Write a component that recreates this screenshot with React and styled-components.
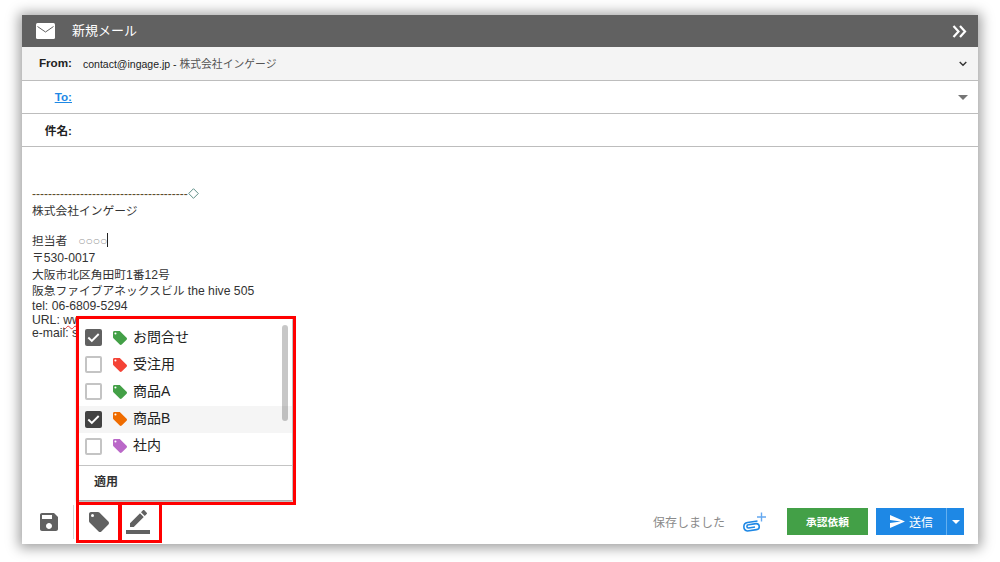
import React from "react";
import styled, { createGlobalStyle } from "styled-components";

const FONT = `"Liberation Sans", "Noto Sans CJK JP", sans-serif`;

const Global = createGlobalStyle`
  html, body { margin: 0; padding: 0; background: #fff; width: 1000px; height: 562px; overflow: hidden; }
  body { font-family: ${FONT}; }
  * { box-sizing: border-box; }
`;

const Page = styled.div`
  width: 1000px;
  height: 562px;
  padding: 15px 22px 18px;
`;

const Panel = styled.div`
  position: relative;
  height: 529px;
  background: #fff;
  display: flex;
  flex-direction: column;
  box-shadow: 0 1px 12px 3px rgba(0, 0, 0, 0.38);
`;

const Header = styled.div`
  height: 32px;
  background: #616161;
  display: flex;
  align-items: center;
  padding: 0 11px 0 14px;
  color: #fff;
  flex: none;
`;

const HeaderTitle = styled.div`
  font-size: 13px;
  line-height: 17px;
  margin: -1px 0 0 17px;
  flex: 1;
`;

const Row = styled.div`
  height: ${(p) => p.$h}px;
  flex: none;
  display: flex;
  align-items: center;
  background: ${(p) => (p.$shaded ? "#f4f4f4" : "#fff")};
  border-bottom: 1px solid #bdbdbd;
  padding-right: ${(p) => p.$pr || 10}px;
`;

const Label = styled.div`
  width: 50px;
  text-align: right;
  font-size: 11.7px;
  font-weight: 700;
  color: #222;
  flex: none;
  margin-top: -2px;
`;

const ToLabel = styled(Label)`
  color: #1e88e5;
  text-decoration: underline;
`;

const FromValue = styled.div`
  margin: -2px 0 0 11px;
  font-size: 10.5px;
  color: #222;
  flex: 1;
`;

const FromName = styled.span`
  font-size: 10.8px;
  color: #555;
`;

const Spacer = styled.div`
  flex: 1;
`;

const Body = styled.div`
  flex: 1;
  padding: 38px 10px 0;
  font-size: 12.2px;
  color: #333;
  min-height: 0;
`;

const Line = styled.div`
  height: ${(p) => p.$h}px;
  line-height: ${(p) => p.$h}px;
  white-space: nowrap;
`;

const Jp = styled.span`
  font-size: 11.75px;
`;

const DashLine = styled.div`
  display: flex;
  align-items: center;
  height: 17px;
  margin-bottom: 1px;
  font-size: 12px;
  color: #5a4a2a;
  white-space: nowrap;
`;

const Circles = styled.span`
  color: #999;
  margin-left: 11px;
  font-size: 12px;
`;

const Caret = styled.span`
  display: inline-block;
  width: 1px;
  height: 14px;
  background: #222;
  vertical-align: -2px;
`;

const Squiggle = styled.span`
  text-decoration: underline wavy #e53935 1px;
`;

const Footer = styled.div`
  height: 46px;
  flex: none;
  display: flex;
  align-items: center;
  padding: 1px 14px 0 18px;
`;

const ToolIcon = styled.div`
  width: ${(p) => p.$w}px;
  margin-left: ${(p) => p.$ml || 0}px;
  display: flex;
  align-items: center;
  justify-content: center;
  flex: none;
`;

const Divider = styled.div`
  width: 1px;
  height: 34px;
  background: #d5d5d5;
  margin: 0 15px;
  flex: none;
`;

const Saved = styled.div`
  font-size: 12px;
  color: #8a8a8a;
  margin-right: 17px;
`;

const ApproveButton = styled.button`
  width: 81px;
  height: 27px;
  margin-left: 19px;
  margin-right: 8px;
  background: #43a047;
  color: #fff;
  border: none;
  padding: 0;
  font: 700 10.7px ${FONT};
`;

const SendGroup = styled.div`
  display: flex;
  height: 27px;
  width: 88px;
  background: #1e88e5;
  color: #fff;
  flex: none;
`;

const SendMain = styled.div`
  flex: 1;
  display: flex;
  align-items: center;
  justify-content: center;
  gap: 4px;
  font-size: 12px;
  border-right: 1px solid #64b0f0;
  padding-left: 1px;
`;

const SendCaret = styled.div`
  width: 17px;
  display: flex;
  align-items: center;
  justify-content: center;
`;

const Triangle = styled.div`
  width: 0;
  height: 0;
  border-left: ${(p) => p.$s}px solid transparent;
  border-right: ${(p) => p.$s}px solid transparent;
  border-top: ${(p) => p.$s}px solid ${(p) => p.$c};
`;

const Popup = styled.div`
  position: absolute;
  left: 56px;
  top: 303px;
  width: 214px;
  height: 182px;
  background: #fff;
  box-shadow: 0 1px 3px 1px rgba(0, 0, 0, 0.4);
  padding-top: 6px;
  display: flex;
  flex-direction: column;
`;

const Item = styled.div`
  height: 27.2px;
  flex: none;
  display: flex;
  align-items: center;
  padding-left: 7px;
  background: ${(p) => (p.$hover ? "#f5f5f5" : "transparent")};
  font-size: 14px;
  color: #222;
`;

const ItemLabel = styled.span`
  margin-top: -4px;
`;

const Check = styled.div`
  width: 17px;
  height: 17px;
  border-radius: 2px;
  display: flex;
  align-items: center;
  justify-content: center;
  background: ${(p) => (p.$on ? p.$c : "#fff")};
  border: ${(p) => (p.$on ? "none" : "2px solid #c4c4c4")};
  flex: none;
`;

const TagWrap = styled.div`
  width: 15px;
  height: 15px;
  margin: 1px 5px 0 11px;
  flex: none;
  display: flex;
`;

const Scrollbar = styled.div`
  position: absolute;
  right: 4px;
  top: 7px;
  width: 6px;
  height: 96px;
  border-radius: 3px;
  background: rgba(0, 0, 0, 0.22);
`;

const PopupRule = styled.div`
  height: 1px;
  background: #c4c4c4;
  margin-top: 5px;
  flex: none;
`;

const Apply = styled.div`
  flex: 1;
  display: flex;
  align-items: center;
  padding: 0 0 5px 16px;
  font-size: 12px;
  font-weight: 700;
  color: #333;
`;

const Highlight = styled.div`
  position: absolute;
  left: ${(p) => p.$l}px;
  top: ${(p) => p.$t}px;
  width: ${(p) => p.$w}px;
  height: ${(p) => p.$h}px;
  border: 3px solid #f00;
  pointer-events: none;
`;

const MailIcon = () => (
  <svg width="19" height="16" viewBox="0 0 19 16">
    <rect x="0" y="0" width="19" height="16" rx="1.5" fill="#fff" />
    <path d="M1.5 3.5 L9.5 9 L17.5 3.5" fill="none" stroke="#616161" strokeWidth="1" />
  </svg>
);

const DoubleChevron = () => (
  <svg width="15" height="13" viewBox="0 0 15 13">
    <path d="M1.5 1 L6.5 6.5 L1.5 12 M8 1 L13 6.5 L8 12" fill="none" stroke="#fff" strokeWidth="2.2" />
  </svg>
);

const SmallChevron = () => (
  <svg width="8" height="6" viewBox="0 0 8 6">
    <path d="M0.7 1 L4 4.3 L7.3 1" fill="none" stroke="#333" strokeWidth="1.4" />
  </svg>
);

const Tick = () => (
  <svg width="13" height="11" viewBox="0 0 13 11">
    <path d="M1.3 5.5 L4.8 9 L11.7 2" fill="none" stroke="#fff" strokeWidth="1.9" />
  </svg>
);

const Tag = ({ color, size = 14 }) => (
  <svg width={size} height={size} viewBox="2 2 20 20">
    <path
      fill={color}
      d="M21.41 11.58l-9-9C12.05 2.22 11.55 2 11 2H4c-1.1 0-2 .9-2 2v7c0 .55.22 1.05.59 1.42l9 9c.36.36.86.58 1.41.58.55 0 1.05-.22 1.41-.59l7-7c.37-.36.59-.86.59-1.41 0-.55-.23-1.06-.59-1.42z"
    />
    <circle cx="5.5" cy="5.5" r="1.5" fill="#fff" />
  </svg>
);

const SaveIcon = () => (
  <svg width="18" height="18" viewBox="3 3 18 18">
    <path
      fill="#616161"
      d="M17 3H5c-1.11 0-2 .9-2 2v14c0 1.1.89 2 2 2h14c1.1 0 2-.9 2-2V7l-4-4zm-5 16c-1.66 0-3-1.34-3-3s1.34-3 3-3 3 1.34 3 3-1.34 3-3 3zm3-10H5V5h10v4z"
    />
  </svg>
);

const PencilIcon = () => (
  <svg width="24" height="24" viewBox="0 0 24 24">
    <path fill="#616161" d="M0 20h24v4H0z" />
    <path fill="#616161" d="M17.75 7L14 3.25l-10 10V17h3.75l10-10zm2.96-2.96c.39-.39.39-1.02 0-1.41L18.37.29c-.39-.39-1.02-.39-1.41 0L15 2.25 18.75 6l1.96-1.96z" />
  </svg>
);

const ClipIcon = () => (
  <svg width="26" height="22" viewBox="0 0 26 22">
    <path
      d="M15.5 10 L5.5 11.5 A4.3 4.3 0 0 0 5.5 20 L14.5 18.6 A3 3 0 0 0 14 12.6 L6.5 13.8 A1.6 1.6 0 0 0 6.5 17 L13 16"
      fill="none"
      stroke="#1e88e5"
      strokeWidth="1.6"
    />
    <path d="M19.5 1.5 V10.5 M15 6 H24" stroke="#64a8f0" strokeWidth="1.4" />
  </svg>
);

const SendIcon = () => (
  <svg width="15" height="13" viewBox="2 3 21 18">
    <path fill="#fff" d="M2.01 21L23 12 2.01 3 2 10l15 2-15 2z" />
  </svg>
);

const DiamondIcon = () => (
  <svg width="11" height="11" viewBox="0 0 11 11">
    <path d="M5.5 0.7 L10.3 5.5 L5.5 10.3 L0.7 5.5 Z" fill="none" stroke="#5f8f88" />
  </svg>
);

const tags = [
  { label: "お問合せ", color: "#43a047", checked: true, box: "#616161" },
  { label: "受注用", color: "#f44336" },
  { label: "商品A", color: "#43a047" },
  { label: "商品B", color: "#ef6c00", checked: true, box: "#424242", hover: true },
  { label: "社内", color: "#ba68c8" },
];

export default function App() {
  return (
    <Page>
      <Global />
      <Panel>
        <Header>
          <MailIcon />
          <HeaderTitle>新規メール</HeaderTitle>
          <DoubleChevron />
        </Header>
        <Row $h={34} $shaded $pr={11}>
          <Label>From:</Label>
          <FromValue>
            contact@ingage.jp - <FromName>株式会社インゲージ</FromName>
          </FromValue>
          <SmallChevron />
        </Row>
        <Row $h={33}>
          <ToLabel>To:</ToLabel>
          <Spacer />
          <Triangle $s={5} $c="#757575" />
        </Row>
        <Row $h={33}>
          <Label>件名:</Label>
        </Row>
        <Body>
          <DashLine>
            {"-".repeat(39)}
            <DiamondIcon />
          </DashLine>
          <Line $h={16}>
            <Jp>株式会社インゲージ</Jp>
          </Line>
          <Line $h={14} />
          <Line $h={16}>
            <Jp>担当者</Jp>
            <Circles>○○○○</Circles>
            <Caret />
          </Line>
          <Line $h={17}>
            <Jp>〒</Jp>530-0017
          </Line>
          <Line $h={17}>
            <Jp>大阪市北区角田町</Jp>1<Jp>番</Jp>12<Jp>号</Jp>
          </Line>
          <Line $h={16}>
            <Jp>阪急ファイブアネックスビル</Jp> the hive 505
          </Line>
          <Line $h={15}>tel: 06-6809-5294</Line>
          <Line $h={13}>
            URL: <Squiggle>www</Squiggle>
          </Line>
          <Line $h={12}>e-mail: s</Line>
        </Body>
        <Footer>
          <ToolIcon $w={18}>
            <SaveIcon />
          </ToolIcon>
          <Divider />
          <ToolIcon $w={20}>
            <Tag color="#616161" size={20} />
          </ToolIcon>
          <ToolIcon $w={24} $ml={17}>
            <PencilIcon />
          </ToolIcon>
          <Spacer />
          <Saved>保存しました</Saved>
          <ClipIcon />
          <ApproveButton>承認依頼</ApproveButton>
          <SendGroup>
            <SendMain>
              <SendIcon />
              送信
            </SendMain>
            <SendCaret>
              <Triangle $s={4} $c="#fff" />
            </SendCaret>
          </SendGroup>
        </Footer>
        <Popup>
          {tags.map((t) => (
            <Item key={t.label} $hover={t.hover}>
              <Check $on={t.checked} $c={t.box}>
                {t.checked && <Tick />}
              </Check>
              <TagWrap>
                <Tag color={t.color} />
              </TagWrap>
              <ItemLabel>{t.label}</ItemLabel>
            </Item>
          ))}
          <PopupRule />
          <Apply>適用</Apply>
          <Scrollbar />
        </Popup>
        <Highlight $l={54} $t={301} $w={220} $h={189} />
        <Highlight $l={54} $t={487} $w={45} $h={41} />
        <Highlight $l={97} $t={487} $w={43} $h={41} />
      </Panel>
    </Page>
  );
}
